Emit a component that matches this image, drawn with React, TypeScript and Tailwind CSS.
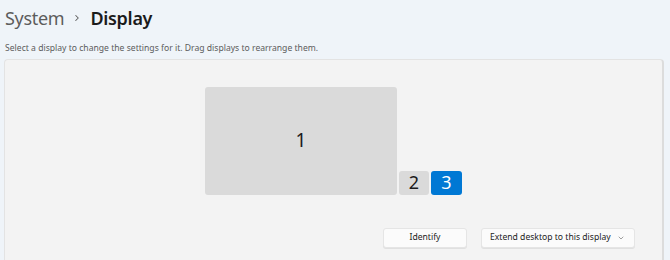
import { ChevronRight, ChevronDown } from "lucide-react";

export default function App() {
  return (
    <div className="h-[260px] w-[670px] overflow-hidden bg-[#eff4f9] font-['Noto_Sans',sans-serif] text-[#1b1b1b]">
      {/* Breadcrumb header */}
      <div className="flex items-center pl-[5px] pt-[5px] h-[30px]">
        <span className="text-[18px] tracking-[-0.3px] text-[#5c5c5c] leading-none">System</span>
        <ChevronRight className="mx-[8px] h-[10px] w-[10px] text-[#5c5c5c]" strokeWidth={2.5} />
        <span className="text-[18px] tracking-[-0.3px] font-semibold leading-none">Display</span>
      </div>

      <p className="pl-[5px] mt-[14px] text-[8.6px] text-[#5c5c5c] leading-none">
        Select a display to change the settings for it. Drag displays to rearrange them.
      </p>

      {/* Arrangement panel */}
      <div className="ml-[4px] mt-[6px] w-[660px] h-[220px] rounded-[4px] border border-[#e3e3e3] border-r-2 border-r-[#dcdcdc] bg-[#f3f3f3]">
        <div className="flex items-end pl-[200px] pt-[27px]">
          <div className="flex h-[108px] w-[192px] items-center justify-center rounded-[3px] bg-[#dadada] text-[19px] text-[#1b1b1b]">
            1
          </div>
          <div className="ml-[2px] flex h-[24px] w-[30px] items-center justify-center rounded-[3px] bg-[#dadada] text-[18px]">
            2
          </div>
          <div className="ml-[2px] flex h-[24px] w-[31px] items-center justify-center rounded-[3px] bg-[#0078d4] text-[18px] text-white">
            3
          </div>
        </div>

        <div className="mt-[33px] flex pl-[378px] gap-[14px]">
          <button className="h-[20px] w-[84px] rounded-[3px] border border-[#e5e5e5] bg-[#fbfbfb] text-[8.6px] text-[#1b1b1b] shadow-[0_1px_0_#e0e0e0]">
            Identify
          </button>
          <button className="flex h-[20px] w-[154px] items-center justify-between whitespace-nowrap rounded-[3px] border border-[#e5e5e5] bg-[#fbfbfb] pl-[8px] pr-[9px] text-[8.6px] text-[#1b1b1b] shadow-[0_1px_0_#e0e0e0]">
            <span>Extend desktop to this display</span>
            <ChevronDown className="h-[8px] w-[8px] text-[#707070]" strokeWidth={2} />
          </button>
        </div>
      </div>
    </div>
  );
}
